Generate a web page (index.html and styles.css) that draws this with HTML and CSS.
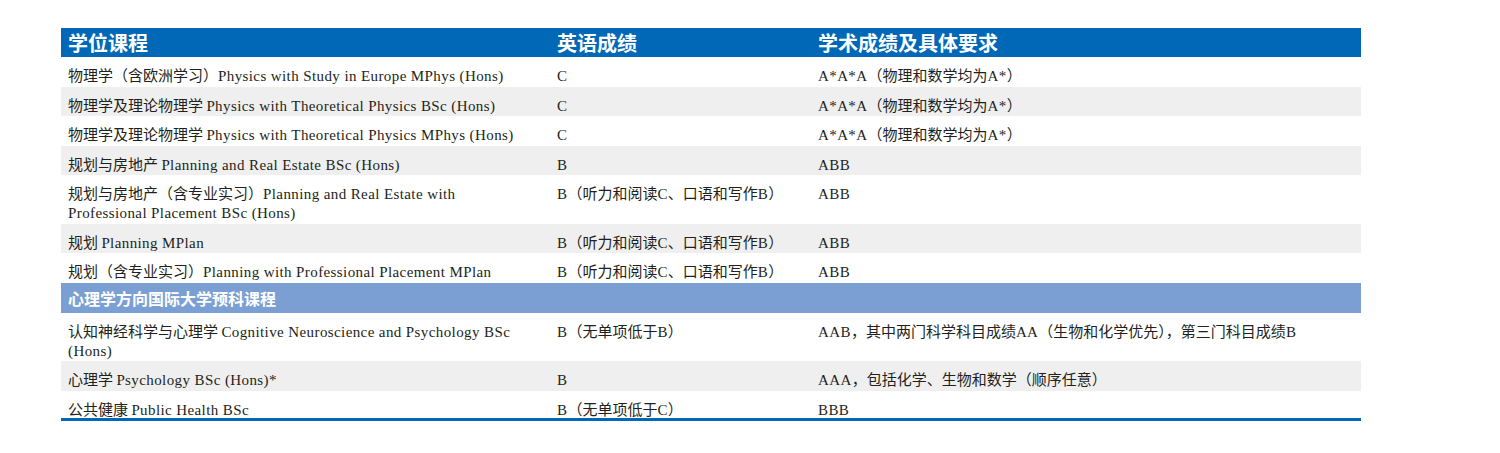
FILE: index.html
```html
<!DOCTYPE html>
<html lang="zh-CN">
<head>
<meta charset="utf-8">
<link rel="stylesheet" href="styles.css">
</head>
<body>
<div class="page">
<table class="req">
  <colgroup><col class="c1"><col class="c2"><col class="c3"></colgroup>
  <thead>
    <tr class="head"><th>学位课程</th><th>英语成绩</th><th>学术成绩及具体要求</th></tr>
  </thead>
  <tbody>
    <tr><td>物理学（含欧洲学习）<span class="en">Physics with Study in Europe MPhys (Hons)</span></td><td><span class="en">C</span></td><td><span class="en">A*A*A</span>（物理和数学均为<span class="en">A*</span>）</td></tr>
    <tr class="alt"><td>物理学及理论物理学 <span class="en">Physics with Theoretical Physics BSc (Hons)</span></td><td><span class="en">C</span></td><td><span class="en">A*A*A</span>（物理和数学均为<span class="en">A*</span>）</td></tr>
    <tr><td>物理学及理论物理学 <span class="en">Physics with Theoretical Physics MPhys (Hons)</span></td><td><span class="en">C</span></td><td><span class="en">A*A*A</span>（物理和数学均为<span class="en">A*</span>）</td></tr>
    <tr class="alt"><td>规划与房地产 <span class="en">Planning and Real Estate BSc (Hons)</span></td><td><span class="en">B</span></td><td><span class="en">ABB</span></td></tr>
    <tr class="two"><td>规划与房地产（含专业实习）<span class="en">Planning and Real Estate with<br>Professional Placement BSc (Hons)</span></td><td><span class="en">B</span>（听力和阅读<span class="en">C</span>、口语和写作<span class="en">B</span>）</td><td><span class="en">ABB</span></td></tr>
    <tr class="alt"><td>规划 <span class="en">Planning MPlan</span></td><td><span class="en">B</span>（听力和阅读<span class="en">C</span>、口语和写作<span class="en">B</span>）</td><td><span class="en">ABB</span></td></tr>
    <tr><td>规划（含专业实习）<span class="en">Planning with Professional Placement MPlan</span></td><td><span class="en">B</span>（听力和阅读<span class="en">C</span>、口语和写作<span class="en">B</span>）</td><td><span class="en">ABB</span></td></tr>
    <tr class="section"><td colspan="3">心理学方向国际大学预科课程</td></tr>
    <tr class="two"><td>认知神经科学与心理学 <span class="en">Cognitive Neuroscience and Psychology BSc<br>(Hons)</span></td><td><span class="en">B</span>（无单项低于<span class="en">B</span>）</td><td><span class="en">AAB</span>，其中两门科学科目成绩<span class="en">AA</span>（生物和化学优先），第三门科目成绩<span class="en">B</span></td></tr>
    <tr class="alt"><td>心理学 <span class="en">Psychology BSc (Hons)*</span></td><td><span class="en">B</span></td><td><span class="en">AAA</span>，包括化学、生物和数学（顺序任意）</td></tr>
    <tr class="last"><td>公共健康 <span class="en">Public Health BSc</span></td><td><span class="en">B</span>（无单项低于<span class="en">C</span>）</td><td><span class="en">BBB</span></td></tr>
  </tbody>
</table>
</div>
</body>
</html>
```
FILE: styles.css
```css
html, body {
  margin: 0;
  padding: 0;
  background: #ffffff;
}
.page {
  padding: 28px 0 0 61px;
}
.req {
  border-collapse: collapse;
  width: 1300px;
  table-layout: fixed;
  font-family: "Noto Sans CJK SC", sans-serif;
  font-size: 15px;
  color: #231f20;
}
.c1 { width: 489px; }
.c2 { width: 261px; }
.c3 { width: 550px; }
.en {
  font-family: "Liberation Serif", serif;
  letter-spacing: 0.4px;
  line-height: 1;
}
.head th {
  background: #0068b6;
  color: #ffffff;
  text-align: left;
  font-family: "Noto Sans CJK SC", sans-serif;
  font-weight: 700;
  font-size: 20px;
  line-height: 29px;
  height: 29px;
  padding: 0 7px;
}
td {
  padding: 8px 7px 2.5px;
  line-height: 19px;
  vertical-align: top;
  white-space: nowrap;
}
tr.alt td {
  background: #efefef;
}
tr.section td {
  background: #7b9fd3;
  color: #ffffff;
  font-family: "Noto Sans CJK SC", sans-serif;
  font-weight: 700;
  font-size: 16px;
  line-height: 22px;
  padding: 4px 7px 4px;
}
tr.last td {
  border-bottom: 3px solid #0068b6;
  padding-bottom: 0.5px;
}
```
